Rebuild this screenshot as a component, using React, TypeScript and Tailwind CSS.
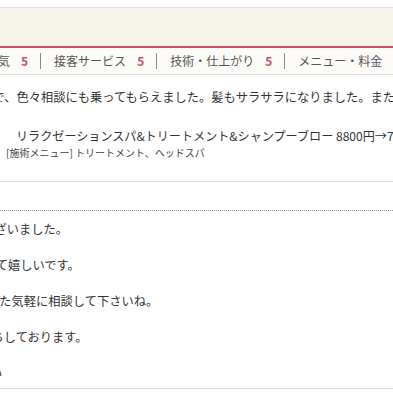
const ratings = [
  { label: '雰囲気', score: 5 },
  { label: '接客サービス', score: 5 },
  { label: '技術・仕上がり', score: 5 },
  { label: 'メニュー・料金', score: 5 },
]

export default function App() {
  return (
    <div className="w-[393px] h-[393px] overflow-hidden bg-white text-[#333] font-['Noto_Sans_CJK_JP','Noto_Sans',sans-serif] whitespace-nowrap">
      {/* header strip */}
      <div className="h-[7px]" />
      <div className="h-[39px] border-t border-[#dddddd] bg-[#f6f3eb]" />
      <div className="h-[2px] bg-[#c9506b]" />

      {/* rating row */}
      <div className="h-[27px] border-b border-[#dddddd] bg-[#fcfbf8] flex items-center text-[12px] text-[#555]">
        <div className="-ml-[39px] flex items-center">
          {ratings.map((r, i) => (
            <span
              key={r.label}
              className={`flex items-center h-4 leading-4 pl-[13px] pr-[12px] ${i > 0 ? 'border-l border-[#888]' : ''}`}
            >
              {r.label}
              <b className="ml-[11px] font-bold text-[#c9506b]">{r.score}</b>
            </span>
          ))}
        </div>
      </div>

      {/* review body */}
      <div className="text-[12.25px] leading-[18px]">
        <p className="mt-[13px] -ml-[32px]">
          丁寧で、色々相談にも乗ってもらえました。髪もサラサラになりました。また行きたいです。
        </p>
        <p className="mt-[21px] pl-[16px] text-[12.1px]">
          リラクゼーションスパ&amp;トリートメント&amp;シャンプーブロー 8800円→7700円
        </p>
        <p className="mt-px pl-[6px] text-[10px] leading-[14px] text-[#444]">
          [施術メニュー] トリートメント、ヘッドスパ
        </p>
      </div>

      <div className="mt-[21px] border-t border-[#dddddd]" />

      {/* salon reply */}
      <div className="mt-[28px] border-t border-dotted border-[#999]" />
      <div className="pt-[9px] text-[12.25px] leading-[18px]">
        <p className="h-[36px] -ml-[79px]">ありがとうございました。</p>
        <p className="h-[36px] -ml-[114px]">気に入っていただけて嬉しいです。</p>
        <p className="h-[36px] -ml-[13px]">また気軽に相談して下さいね。</p>
        <p className="h-[36px] -ml-[33px]">お待ちしております。</p>
        <p className="h-[18px] -ml-[10px]">い</p>
      </div>
      <div className="mt-[6px] border-t border-[#dddddd]" />
    </div>
  )
}
